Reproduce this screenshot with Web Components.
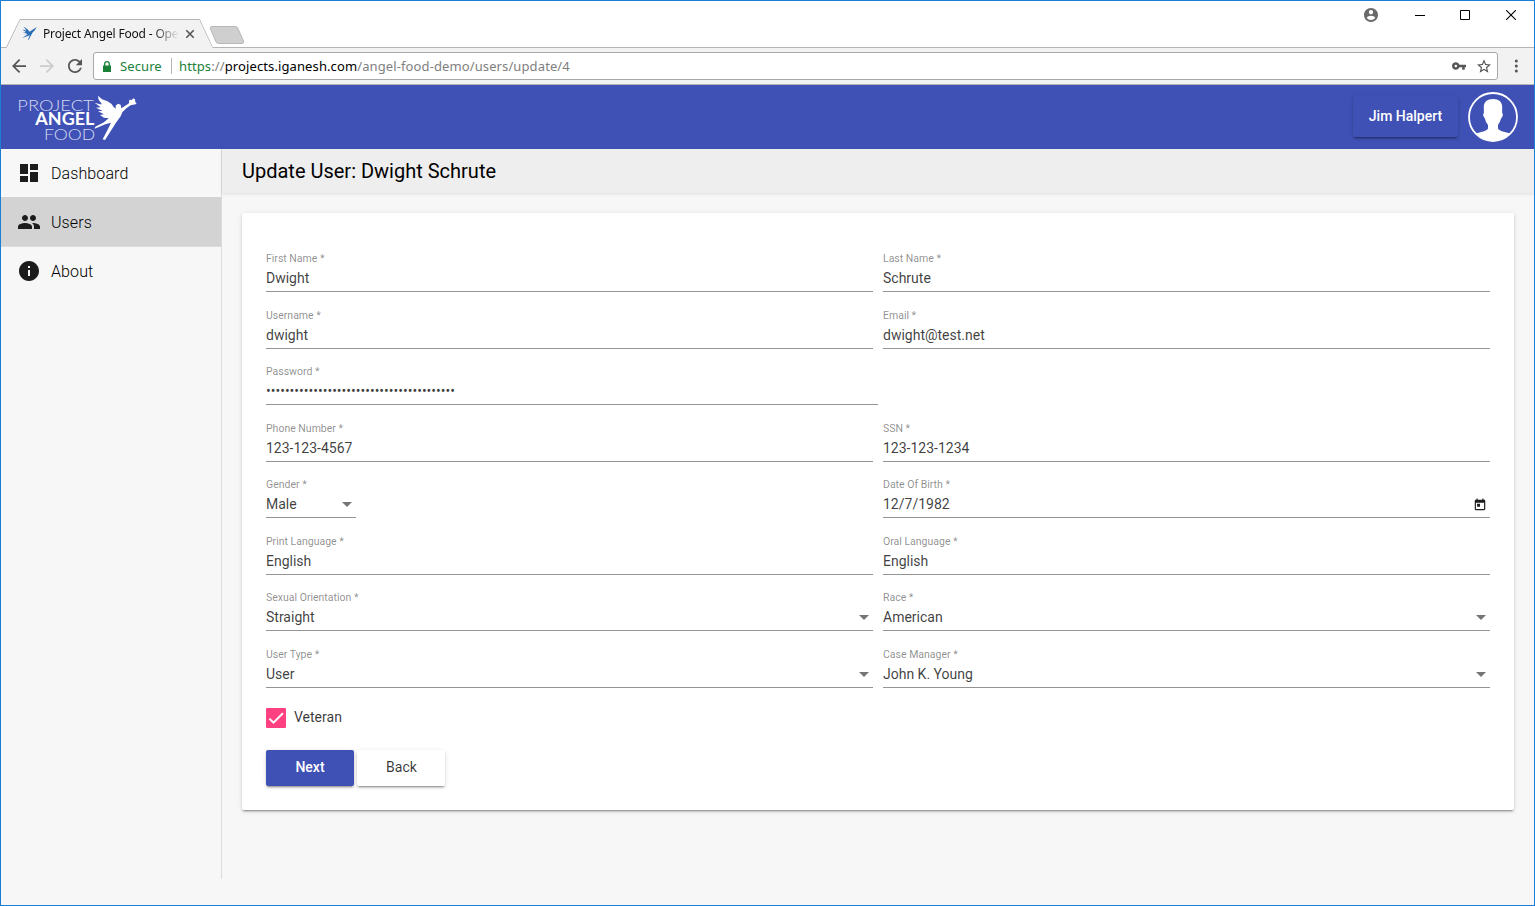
<!DOCTYPE html>
<html lang="en">
<head>
<meta charset="utf-8">
<title>Project Angel Food</title>
<style>
html,body{margin:0;height:100%;overflow:hidden}
body{font-family:Roboto,sans-serif;font-size:14px;color:rgba(0,0,0,.87)}
</style>
</head>
<body>
<app-window>
  <tab-strip slot="chrome"></tab-strip>
  <nav-toolbar slot="chrome"></nav-toolbar>
  <app-header slot="chrome">Jim Halpert</app-header>
  <side-nav slot="side">
    <nav-item icon="dashboard">Dashboard</nav-item>
    <nav-item icon="users" active>Users</nav-item>
    <nav-item icon="about">About</nav-item>
  </side-nav>
  <page-title>Update User: Dwight Schrute</page-title>
  <form-card>
    <form-row><form-field label="First Name *">Dwight</form-field><form-field label="Last Name *">Schrute</form-field></form-row>
    <form-row><form-field label="Username *">dwight</form-field><form-field label="Email *">dwight@test.net</form-field></form-row>
    <form-row><form-field label="Password *" kind="password">••••••••••••••••••••••••••••••••••••••••</form-field></form-row>
    <form-row><form-field label="Phone Number *">123-123-4567</form-field><form-field label="SSN *">123-123-1234</form-field></form-row>
    <form-row><form-field label="Gender *" kind="select" narrow>Male</form-field><form-field label="Date Of Birth *" kind="date">12/7/1982</form-field></form-row>
    <form-row><form-field label="Print Language *">English</form-field><form-field label="Oral Language *">English</form-field></form-row>
    <form-row><form-field label="Sexual Orientation *" kind="select">Straight</form-field><form-field label="Race *" kind="select">American</form-field></form-row>
    <form-row><form-field label="User Type *" kind="select">User</form-field><form-field label="Case Manager *" kind="select">John K. Young</form-field></form-row>
    <check-box>Veteran</check-box>
    <button-row><raised-button primary>Next</raised-button><raised-button>Back</raised-button></button-row>
  </form-card>
</app-window>
<script>
const define = (name, render) => customElements.define(name, class extends HTMLElement {
  constructor() {
    super();
    this.attachShadow({ mode: 'open' });
  }
  connectedCallback() {
    this.shadowRoot.innerHTML = render(this);
  }
});

define('app-window', () => `
<style>
:host{display:flex;flex-direction:column;box-sizing:border-box;height:906px;width:1535px;border:1px solid #1a7fd4;background:#f7f7f7;overflow:hidden}
.chrome{display:flex;flex-direction:column;flex:none}
.body{display:flex;flex:1;min-height:0}
main{flex:1;min-width:0;display:flex;flex-direction:column}
</style>
<div class="chrome"><slot name="chrome"></slot></div>
<div class="body"><slot name="side"></slot><main><slot></slot></main></div>`);

define('tab-strip', () => `
<style>
:host{display:grid;height:47px;background:#fff;font-family:"Noto Sans","Open Sans",sans-serif}
svg.bg,.row{grid-area:1/1}
svg{display:block}
.row{display:flex;align-items:flex-start;height:47px;color:#111}
.fav{margin:25px 0 0 21px}
.title{margin:24px 0 0 6px;width:136px;font-size:12px;line-height:18px;letter-spacing:-.17px;white-space:nowrap;overflow:hidden;-webkit-mask-image:linear-gradient(90deg,#000 110px,transparent 136px)}
.x{margin:28px 0 0 6px}
.sp{flex:1}
.win{display:flex;gap:0;height:28px;align-items:center}
.win svg{margin-right:32px}
</style>
<svg class="bg" width="1533" height="47" viewBox="1 1 1533 47">
<path d="M0 47.5H6.5L20 19.5H199.5L212.5 47.5H1534" fill="none" stroke="#b4b4b4"/>
<path d="M7 48L20.3 20H199.2L212.5 48Z" fill="#f2f2f2"/>
<path d="M211.500 26.500H235.500Q237 26.500 237.700 28L243.500 41Q244 43.500 242 43.500H218.500Q216.700 43.500 216 42L210.300 28.500Q209.800 26.500 211.500 26.500Z" fill="#cfcfcf" stroke="#b8b8b8"/>
</svg>
<div class="row">
<svg class="fav" width="15" height="15" viewBox="0 0 15 15"><path d="M1.500 0.500L5.500 3.200L7.600 5.800L9.300 4.500L11 3.500L14.500 1L13 4L10.600 6.500L9 9.500L6.500 14L6 13.500L7.800 9.300L4.500 10.600L0 12L4 9.600L6 8.300L2.500 8.200L5 7.300L0.800 6L4 6L0 3.500L4.400 4.600Z" fill="#2a6cb5"/></svg>
<div class="title">Project Angel Food - Open</div>
<svg class="x" width="10" height="10" viewBox="0 0 10 10"><path d="M1.300 1.300L8.700 8.700M8.700 1.300L1.300 8.700" stroke="#555" stroke-width="1.600"/></svg>
<div class="sp"></div>
<div class="win">
<svg style="margin-right:37px" width="14" height="14" viewBox="2 2 20 20"><path fill="#6a6a6a" d="M12 2C6.480 2 2 6.480 2 12s4.480 10 10 10 10-4.480 10-10S17.520 2 12 2zm0 3c1.660 0 3 1.340 3 3s-1.340 3-3 3-3-1.340-3-3 1.340-3 3-3zm0 14.200c-2.500 0-4.710-1.280-6-3.220.03-1.990 4-3.080 6-3.080 1.990 0 5.970 1.090 6 3.080-1.290 1.940-3.500 3.220-6 3.220z"/></svg>
<svg style="margin-right:35px" width="10" height="11" viewBox="0 0 10 11"><path d="M0 5.500H10" stroke="#000"/></svg>
<svg style="margin-right:36px" width="10" height="10" viewBox="0 0 10 10"><path d="M.5.5H9.500V9.500H.5Z" fill="none" stroke="#000"/></svg>
<svg style="margin-right:18px" width="10" height="10" viewBox="0 0 10 10"><path d="M0 0L10 10M10 0L0 10" stroke="#000" stroke-width="1.100"/></svg>
</div></div>`);

define('nav-toolbar', () => `
<style>
:host{display:flex;align-items:center;box-sizing:border-box;height:37px;background:#f2f2f2;border-bottom:1px solid #b4b4b4;font-family:"Noto Sans","Open Sans",sans-serif;font-size:13px}
svg{display:block;flex:none}
.box{box-sizing:border-box;width:1405px;height:28px;border:1px solid #a8a8a8;border-radius:3px;background:#fff;display:flex;align-items:center;margin-left:11px}
.secure{color:#1a8038;margin-left:9px;width:51px;letter-spacing:.1px}
.url{margin-left:7px;color:#808080;white-space:nowrap;flex:1;letter-spacing:.11px}
.bar{width:1px;height:16px;background:#b5b5b5}
.g{color:#1a8038}.k{color:#000}
</style>
<svg style="margin-left:11px" width="14" height="14" viewBox="4 4 16 16"><path fill="#555" d="M20 11H7.830l5.590-5.590L12 4l-8 8 8 8 1.410-1.410L7.830 13H20v-2z"/></svg>
<svg style="margin-left:14px" width="14" height="14" viewBox="4 4 16 16"><path fill="#ccc" d="M12 4l-1.410 1.410L16.170 11H4v2h12.170l-5.580 5.590L12 20l8-8z"/></svg>
<svg style="margin-left:14px" width="14" height="14" viewBox="4 4 16 16"><path fill="#555" d="M17.650 6.350C16.200 4.900 14.210 4 12 4c-4.420 0-7.990 3.580-7.990 8s3.570 8 7.990 8c3.730 0 6.840-2.550 7.730-6h-2.080c-.82 2.330-3.040 4-5.650 4-3.310 0-6-2.690-6-6s2.690-6 6-6c1.660 0 3.140.69 4.220 1.780L13 11h7V4l-2.350 2.350z"/></svg>
<div class="box">
<svg style="margin-left:9px" width="8" height="11" viewBox="0 0 8 11"><path d="M0 4.500H8V11H0Z" fill="#1a8038"/><path d="M1.700 5V3A2.300 2.300 0 0 1 6.300 3V5" fill="none" stroke="#1a8038" stroke-width="1.300"/></svg>
<span class="secure">Secure</span><span class="bar"></span>
<span class="url"><span class="g">https</span>://<span class="k">projects.iganesh.com</span>/angel-food-demo/users/update/4</span>
<svg width="14" height="8" viewBox="1 6 22 12"><path fill="#555" d="M12.650 10C11.830 7.670 9.610 6 7 6c-3.310 0-6 2.690-6 6s2.690 6 6 6c2.610 0 4.830-1.670 5.650-4H17v4h4v-4h2v-4H12.650zM7 14c-1.100 0-2-.9-2-2s.9-2 2-2 2 .9 2 2-.9 2-2 2z"/></svg>
<svg style="margin:0 6px 0 11px" width="14" height="14" viewBox="2 2 20 19"><path fill="#555" d="M22 9.240l-7.190-.62L12 2 9.190 8.630 2 9.240l5.460 4.730L5.820 21 12 17.270 18.180 21l-1.630-7.030L22 9.240zM12 15.400l-3.760 2.270 1-4.280-3.320-2.880 4.380-.38L12 6.100l1.710 4.040 4.380.38-3.320 2.880 1 4.280L12 15.400z"/></svg>
</div>
<svg style="margin-left:16px" width="4" height="14" viewBox="0 0 4 14"><g fill="#555"><circle cx="2.300" cy="2" r="1.500"/><circle cx="2.300" cy="7" r="1.500"/><circle cx="2.300" cy="12" r="1.500"/></g></svg>`);

define('app-header', () => `
<style>
:host{display:flex;align-items:center;height:64px;background:#3f51b5;color:#fff}
.logo{margin-left:17px;margin-top:2px;overflow:visible}
.btn{margin-left:auto;width:105px;height:41px;line-height:40px;margin-right:10px;margin-top:-1px;text-align:center;font-weight:500;border-radius:2px;box-shadow:0 3px 1px -2px rgba(0,0,0,.2),0 2px 2px 0 rgba(0,0,0,.14),0 1px 5px 0 rgba(0,0,0,.12)}
svg{display:block}
.av{margin-right:16px}
</style>
<svg class="logo" width="119.333" height="46" viewBox="54 33 358 138" fill="#fff">
<g font-family="Lato,sans-serif" font-size="49">
<text x="52" y="80" font-weight="300" fill="#d5d9f0" textLength="229" lengthAdjust="spacingAndGlyphs">PROJECT</text>
<text x="106" y="123" font-weight="700" textLength="177" lengthAdjust="spacingAndGlyphs">ANGEL</text>
<text x="132" y="167" font-weight="300" fill="#d5d9f0" textLength="154" lengthAdjust="spacingAndGlyphs">FOOD</text></g>
<path d="M294 35L306 46L321 51L334 59L341 69L347 74L347 65L354 59L362 62L364 73L384 60L387 57L388 47L396 48L399 43L405 46L406 54L410 60L392 64L380 72L367 85L362 97L348 116L315 168L308 166L324 135L333 116L316 121L284 134L286 128L312 115L326 103L312 101L300 93L312 91L294 82L308 81L288 71L302 70L284 56L300 61L306 61L296 47Z"/></svg>
<div class="btn"><slot></slot></div>
<svg class="av" width="50" height="50" viewBox="0 0 50 50"><defs><clipPath id="c"><circle cx="25" cy="25" r="24"/></clipPath></defs><path clip-path="url(#c)" fill="#fff" d="M25 7C31 7 34.500 10 34.200 16C34.200 18 34 20 34.300 21.500C35.500 21.500 34.700 25 33 26.500C32.400 29.500 31 31 30 33V36.500C32 40 39 40 43 42L48 50H2L7 42C11 40 18 40 20 36.500V33C18.500 31 17.600 29.500 17 26.500C15.300 25 14.500 21.500 15.800 21.500C16 20 15.800 18 15.800 16C15.500 10 19 7 25 7Z"/><circle cx="25" cy="25" r="24" fill="none" stroke="#fff" stroke-width="1.800"/></svg>`);

define('side-nav', () => `
<style>:host{display:block;box-sizing:border-box;width:221px;height:730px;border-right:1px solid #dcdcdc}</style><slot></slot>`);

const icons = {
  dashboard: 'M3 13h8V3H3v10zm0 8h8v-6H3v6zm10 0h8V11h-8v10zm0-18v6h8V3h-8z',
  users: 'M16 11c1.660 0 2.990-1.340 2.990-3S17.660 5 16 5c-1.660 0-3 1.340-3 3s1.340 3 3 3zm-8 0c1.660 0 2.990-1.340 2.990-3S9.660 5 8 5C6.340 5 5 6.340 5 8s1.340 3 3 3zm0 2c-2.330 0-7 1.170-7 3.500V19h14v-2.500c0-2.330-4.670-3.500-7-3.500zm8 0c-.29 0-.62.02-.97.05 1.160.84 1.970 1.970 1.970 3.450V19h6v-2.500c0-2.330-4.670-3.500-7-3.500z',
  about: 'M12 2C6.480 2 2 6.480 2 12s4.480 10 10 10 10-4.480 10-10S17.520 2 12 2zm1 15h-2v-6h2v6zm0-8h-2V7h2v2z'
};
define('nav-item', el => `
<style>
:host{display:flex;align-items:center;box-sizing:border-box;height:49px;padding-left:16px;font-size:16px;font-weight:300;letter-spacing:.1px;color:#000;border-bottom:1px solid transparent}
:host([active]){background:#d3d3d3;height:50px;margin-top:-1px;border-bottom-color:#dcdcdc}
:host([active]) svg,:host([active]) span{margin-top:1px}
svg{display:block;margin-right:10px;fill:#1c1c1c}
</style><svg width="24" height="24" viewBox="0 0 24 24"><path d="${icons[el.getAttribute('icon')]}"/></svg><span><slot></slot></span>`);

define('page-title', () => `
<style>:host{display:block;height:44px;line-height:44px;padding-left:20px;font-size:20px;color:#000;background:#eee;box-shadow:0 1px 3px rgba(0,0,0,.1);flex:none}</style><slot></slot>`);

define('form-card', () => `
<style>:host{display:flex;flex-direction:column;box-sizing:border-box;margin:20px 20px 0;height:597px;padding:22.5px 24px 0;background:#fff;border-radius:2px;box-shadow:0 3px 1px -2px rgba(0,0,0,.2),0 2px 2px 0 rgba(0,0,0,.14),0 1px 5px 0 rgba(0,0,0,.12)}</style><slot></slot>`);

define('form-row', () => `
<style>:host{display:grid;grid-template-columns:1fr 1fr;column-gap:10px;height:56.5px;flex:none}</style><slot></slot>`);

const trailing = {
  select: '<svg style="margin-right:4px;margin-top:1px" width="10" height="5" viewBox="0 0 10 5"><path d="M0 0H10L5 5Z" fill="#757575"/></svg>',
  date: '<svg style="margin-right:3px;margin-top:1px" width="14" height="14" viewBox="0 0 24 24"><path fill="#1c1c1c" d="M19 3h-1V1h-2v2H8V1H6v2H5c-1.110 0-1.990.9-1.990 2L3 19c0 1.100.89 2 2 2h14c1.100 0 2-.9 2-2V5c0-1.100-.9-2-2-2zm0 16H5V8h14v11zM7 10h5v5H7z"/></svg>'
};
define('form-field', el => `
<style>
:host{display:flex;flex-direction:column;box-sizing:border-box;height:56.5px;padding-top:17.5px;border-bottom:1px solid #949494}
:host([narrow]){width:90px}
:host([kind=password]){margin-right:-5px}
label{font-size:10.5px;line-height:12px;color:rgba(0,0,0,.46);white-space:nowrap}
.v{display:flex;align-items:center;height:16px;margin-top:5px;color:rgba(0,0,0,.76);white-space:nowrap}
.v span{flex:1}
svg{display:block}
</style><label>${el.getAttribute('label')}</label><div class="v"><span><slot></slot></span>${trailing[el.getAttribute('kind')] || ''}</div>`);

define('check-box', () => `
<style>:host{display:flex;align-items:center;margin-top:20.5px;height:20px;color:rgba(0,0,0,.78)}svg{display:block;margin-right:8px}span{margin-top:-2px}</style>
<svg width="20" height="20" viewBox="0 0 24 24"><rect width="24" height="24" rx="1.500" fill="#ff4081"/><path d="M4.100 12.700L9 17.600L20.300 6.300" fill="none" stroke="#fff" stroke-width="2.400"/></svg><span><slot></slot></span>`);

define('button-row', () => `<style>:host{display:flex;gap:3px;margin-top:22px}</style><slot></slot>`);

define('raised-button', () => `
<style>:host{display:block;box-sizing:border-box;width:88px;height:36px;line-height:35px;padding-left:1px;text-align:center;border-radius:2px;background:#fff;color:rgba(0,0,0,.78);box-shadow:0 3px 1px -2px rgba(0,0,0,.2),0 2px 2px 0 rgba(0,0,0,.14),0 1px 5px 0 rgba(0,0,0,.12)}:host([primary]){padding-left:0;background:#3f51b5;color:#fff;font-weight:500}</style><slot></slot>`);
</script>
</body>
</html>
